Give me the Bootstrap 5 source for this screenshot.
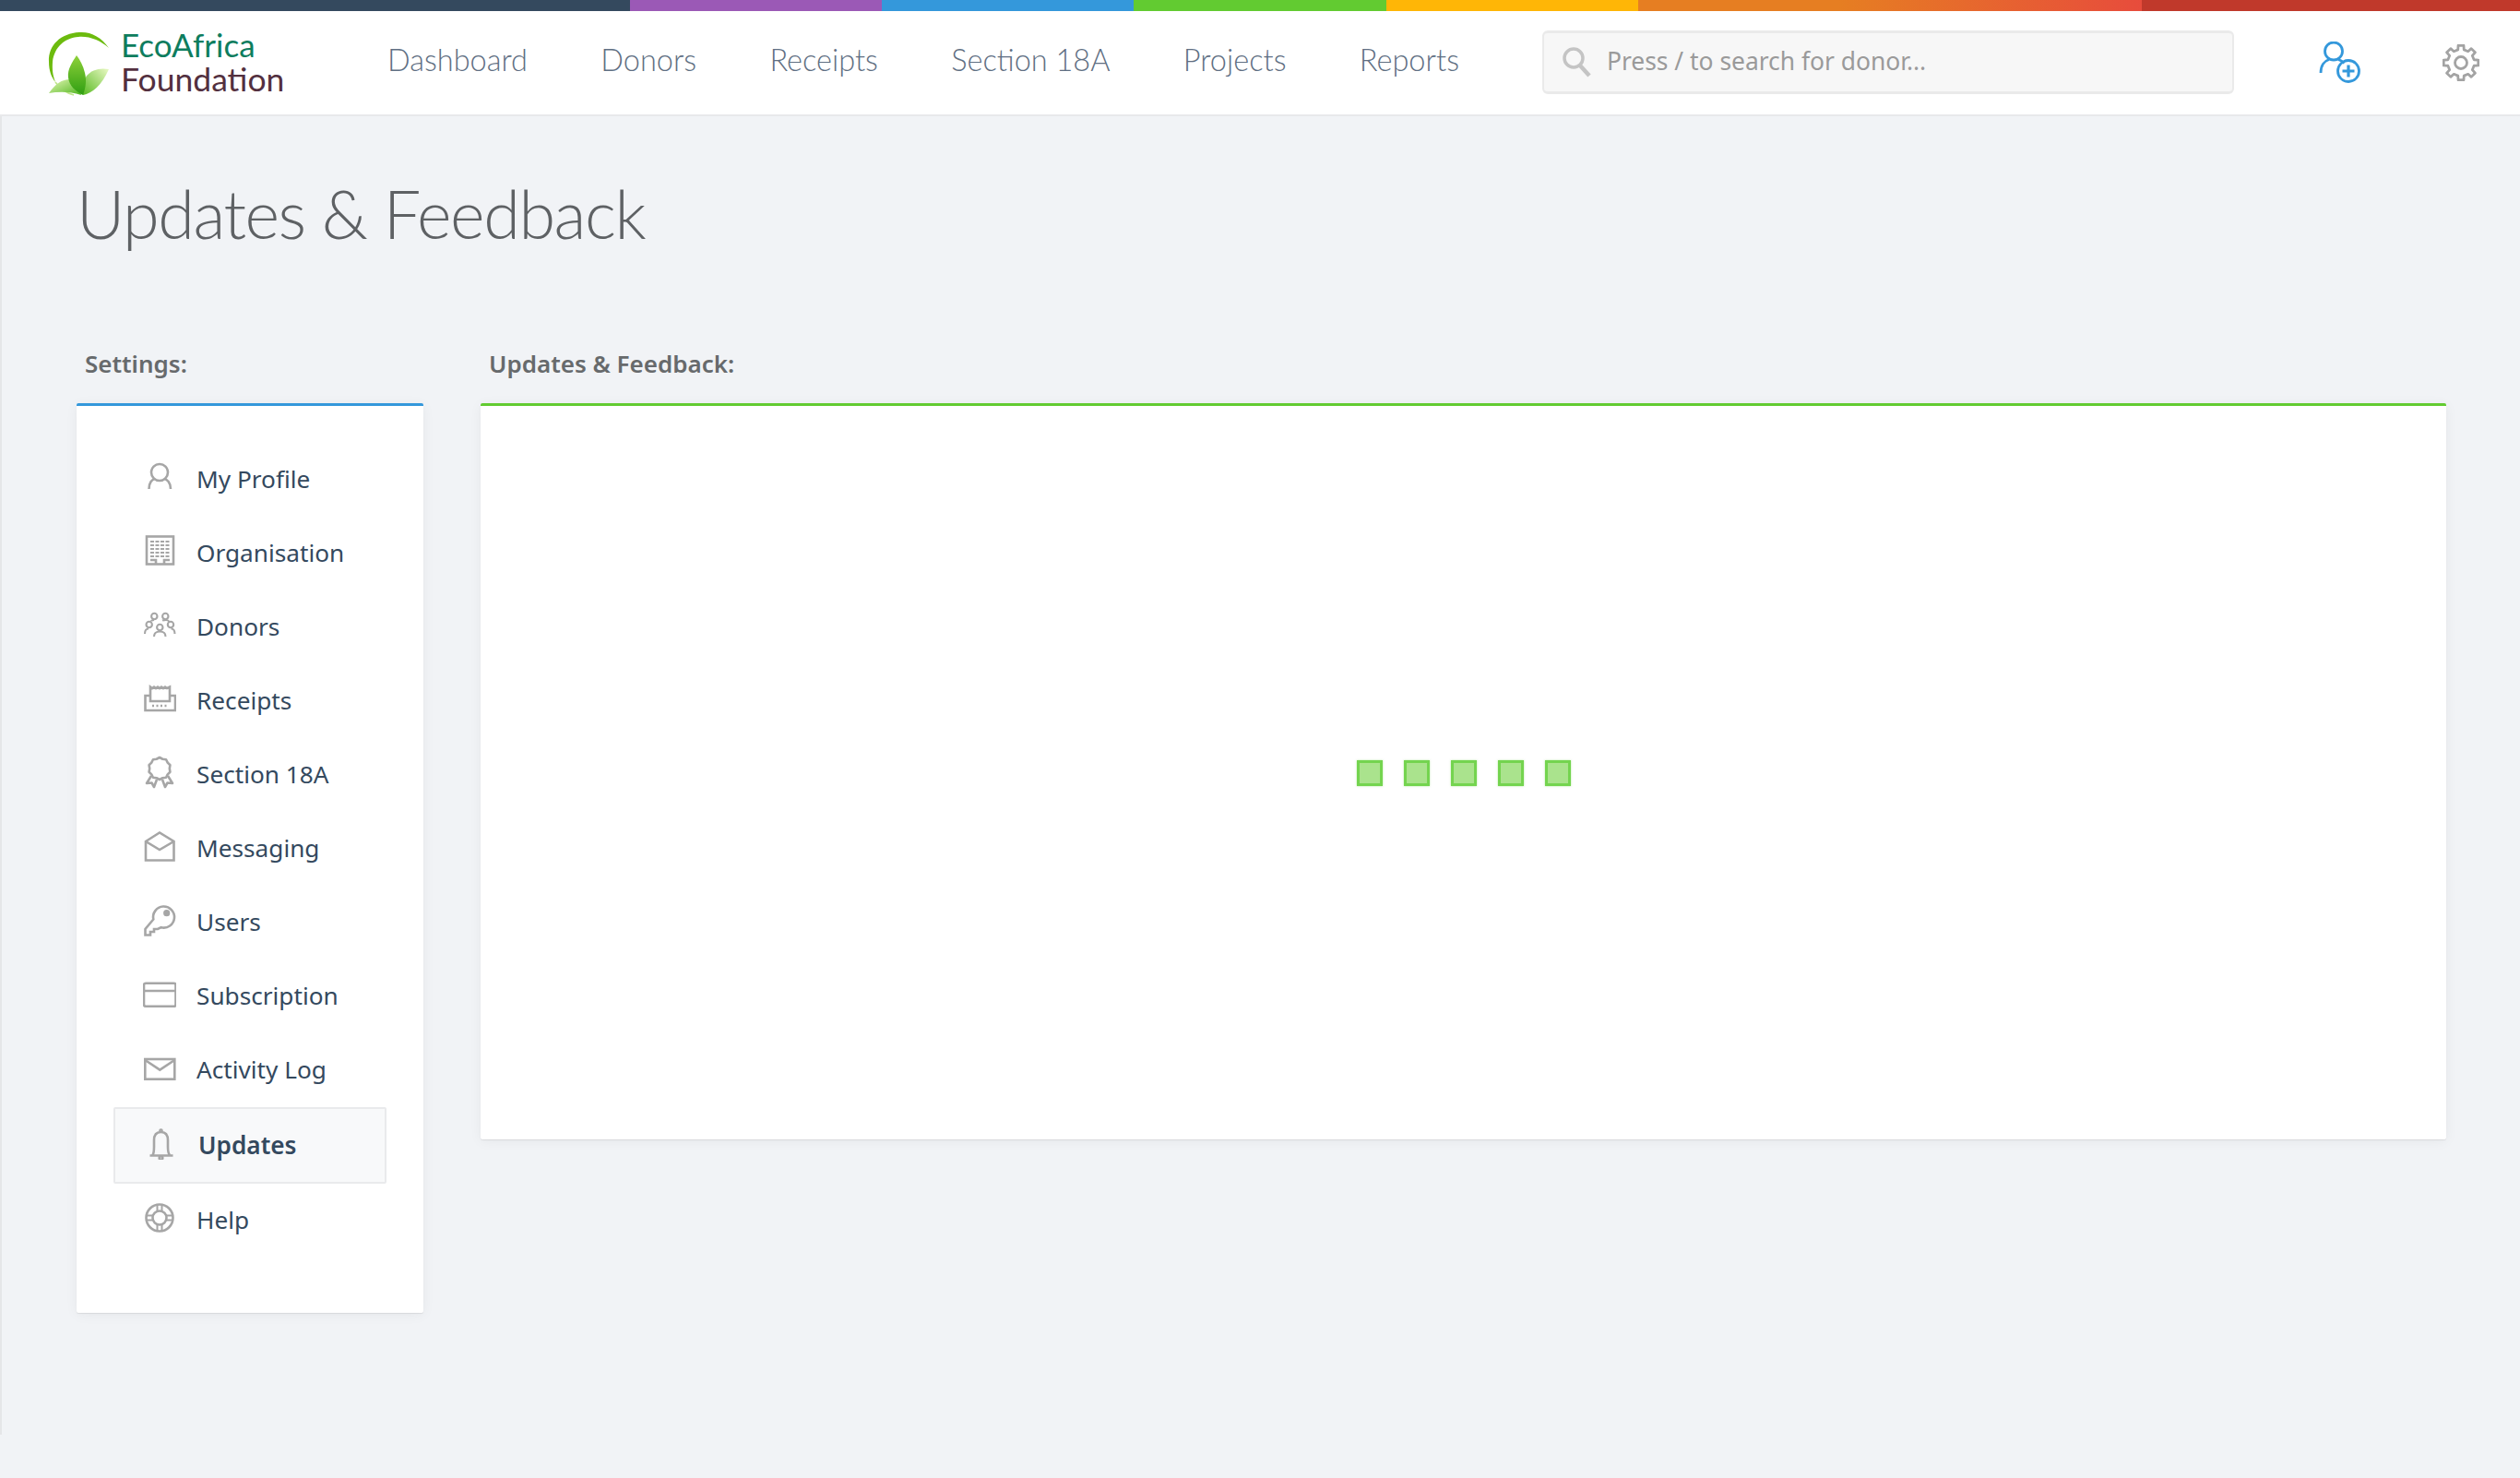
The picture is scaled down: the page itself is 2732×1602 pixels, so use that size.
<!DOCTYPE html>
<html lang="en"><head><meta charset="utf-8"><title>Updates &amp; Feedback</title>
<link href="https://cdn.jsdelivr.net/npm/bootstrap@5.3.0/dist/css/bootstrap.min.css" rel="stylesheet">
<style>
html,body{background:#f1f3f6;font-family:"Noto Sans","Open Sans",sans-serif;}
.stripe{height:12px}
.stripe>div:nth-child(1){width:25%;background:#34495e}
.stripe>div:nth-child(2){width:10%;background:#9b59b6}
.stripe>div:nth-child(3){width:10%;background:#3498db}
.stripe>div:nth-child(4){width:10%;background:#62cb31}
.stripe>div:nth-child(5){width:10%;background:#ffb606}
.stripe>div:nth-child(6){width:20%;background:linear-gradient(90deg,#e67e22 40%,#e74c3c)}
.stripe>div:nth-child(7){width:15%;background:#c0392b}
.topnav{height:114px;background:#fff;border-bottom:2px solid #e8e9eb;padding:0 44px 0 50px}
.brandlink{width:330px}
.brandlogo{width:72px;height:76px;margin-top:2px}
.brandtext{margin-left:9px;font-family:Lato,sans-serif;line-height:1;margin-top:-2px}
.brandtext .b1{display:block;color:#0e7d5e;font-size:35px;line-height:38px}
.brandtext .b2{display:block;color:#53303f;font-size:35.5px;line-height:38px}
.mainlinks{width:1242px;padding:0 40px;margin-top:-6px}
.mainlinks a{font-family:Lato,sans-serif;font-weight:300;color:#5f6f83;font-size:32.5px;text-decoration:none;line-height:40px}
.searchbox{width:750px;height:69px;background:#f7f7f7;border:2px solid #eaeaea;border-top-width:3px;border-bottom-width:3px;border-radius:6px;margin-left:50px;padding-left:18px;margin-top:-2px}
.searchbox input{border:0;background:transparent;outline:0;font-size:26.4px;color:#666;margin-left:16px;width:660px;padding:0;font-family:"Noto Sans",sans-serif}
.searchbox input::placeholder{color:#9a9a9a;opacity:1}
.topicons{margin-left:auto;gap:88px}
.pagewrap{border-left:2px solid #e5e6e8;padding:0 80px 132px 81px}
.pagetitle{font-family:Lato,sans-serif;font-weight:300;color:#5e6164;font-size:72px;letter-spacing:-1.45px;line-height:88px;margin:0;padding-top:61px;height:258px}
.panelhead{font-size:26px;font-weight:600;color:#676a6c;padding-left:9px;height:21px;line-height:21px;margin-bottom:0}
.leftcol{width:376px}
.rightcol{margin-left:62px}
.settingscard{background:#fff;border-top:3px solid #3498db;margin-top:32px;border-radius:2px;box-shadow:0 2px 14px rgba(0,0,0,.05),0 1px 1px rgba(0,0,0,.08);height:986px;padding:40px 40px 0}
.contentcard{background:#fff;border-top:3px solid #62cb31;margin-top:32px;border-radius:2px;box-shadow:0 2px 14px rgba(0,0,0,.05),0 1px 1px rgba(0,0,0,.08);height:798px}
.menurow{height:80px;display:flex;align-items:center;color:#34495e;font-size:26.2px;text-decoration:none;padding-left:32px}
.menurow svg{width:36px;height:36px;margin-right:22px;margin-top:-6px;flex:none;fill:none;stroke:#a6a6a6;stroke-width:2.6}
.menurow.current{font-weight:600;background:#f8f9fa;border:2px solid #e9eaec;border-radius:2px;height:83px;padding-left:32px;margin:0}
.loadsq{width:28px;height:28px;background:#aae38d;border:3px solid #74d44f;box-shadow:0 0 2px rgba(108,208,68,.5)}
.loaders{gap:23px}
</style></head><body>
<div class="stripe d-flex"><div></div><div></div><div></div><div></div><div></div><div></div><div></div></div>
<nav class="topnav d-flex align-items-center">
  <a href="#" class="brandlink d-flex align-items-center text-decoration-none flex-shrink-0">
    <svg class="brandlogo" viewBox="50 28 72 76">
      <defs>
        <linearGradient id="lg1" x1="0" y1="0" x2="0" y2="1"><stop offset="0" stop-color="#8fd13a"/><stop offset="1" stop-color="#2f9e12"/></linearGradient>
        <linearGradient id="lg2" x1="0" y1="0" x2="1" y2="1"><stop offset="0" stop-color="#e4f7b5"/><stop offset="1" stop-color="#4fb51e"/></linearGradient>
        <linearGradient id="lg3" x1="1" y1="0" x2="0" y2="1"><stop offset="0" stop-color="#eaf9c4"/><stop offset="1" stop-color="#58ba22"/></linearGradient>
      </defs>
      <path fill="#6cbb0e" d="M118 49C110 37 98 31 86 32 66 33 52 46 53 64 53 74 56 81 60 86 57 78 56.500 72 57 64 59 48 70 38 85 37 97 36 109 41 118 49Z"/>
      <path fill="none" stroke="#bfe58a" stroke-width="1.500" d="M60 86C65 93 72 98 80 100"/>
      <path fill="url(#lg3)" d="M118 72C108 70 99 73 94 79 90 85 90 93 90 100 100 98 110 90 118 72Z"/>
      <path fill="url(#lg2)" d="M53 98C60 88 67 83 76 83 82 85 86 92 88 100 76 96 64 96 53 98Z"/>
      <path fill="url(#lg1)" d="M83 57C78 65 73 72 74 81 75 90 82 96 90 100 93 92 94 84 92 76 90 68 87 62 83 57Z"/>
    </svg>
    <span class="brandtext"><span class="b1">EcoAfrica</span><span class="b2">Foundation</span></span>
  </a>
  <div class="mainlinks d-flex justify-content-between flex-shrink-0">
    <a href="#">Dashboard</a><a href="#">Donors</a><a href="#">Receipts</a><a href="#">Section 18A</a><a href="#">Projects</a><a href="#">Reports</a>
  </div>
  <div class="searchbox d-flex align-items-center flex-shrink-0">
    <svg width="34" height="34" viewBox="0 0 34 34" fill="none" stroke="#c4c4c4" stroke-width="3.500"><circle cx="14" cy="13" r="10"/><path d="M21 21l10 11" stroke-width="4.500"/></svg>
    <input type="text" placeholder="Press / to search for donor...">
  </div>
  <div class="topicons d-flex align-items-center">
    <svg width="46" height="46" viewBox="0 0 46 46" fill="none" stroke="#3498db" stroke-width="2.800"><circle cx="16" cy="10.500" r="9.500"/><path d="M2 34C2 26 6 21 11 19.500M21 19.500C24 20.500 26 22 27.500 23.500"/><circle cx="32" cy="32" r="11.500"/><path stroke-width="3.200" d="M32 25.500v13M25.500 32h13"/></svg>
    <svg width="40" height="40" viewBox="0 0 40 40" fill="none" stroke="#a3a3a3" stroke-width="2.800" stroke-linejoin="round"><path d="M34.130 16.740L38.770 17.030 38.770 22.970 34.130 23.260 32.300 27.690 35.370 31.170 31.170 35.370 27.690 32.300 23.260 34.130 22.970 38.770 17.030 38.770 16.740 34.130 12.310 32.300 8.830 35.370 4.630 31.170 7.700 27.690 5.870 23.260 1.230 22.970 1.230 17.030 5.870 16.740 7.700 12.310 4.630 8.830 8.830 4.630 12.310 7.700 16.740 5.870 17.030 1.230 22.970 1.230 23.260 5.870 27.690 7.700 31.170 4.630 35.370 8.830 32.300 12.310Z"/><circle cx="20" cy="20" r="6.500"/></svg>
  </div>
</nav>
<main class="pagewrap">
  <h1 class="pagetitle">Updates &amp; Feedback</h1>
  <div class="d-flex">
    <div class="leftcol flex-shrink-0">
      <div class="panelhead">Settings:</div>
      <div class="settingscard">
        <a class="menurow" href="#"><svg viewBox="0 0 36 36"><circle cx="18" cy="13" r="9"/><path d="M6.500 31C6.500 24 10 20.500 13 20M23 20C26 20.500 30 24 30 31"/></svg>My Profile</a>
        <a class="menurow" href="#"><svg viewBox="0 0 36 36"><rect x="4" y="2.500" width="29" height="30"/><path stroke-width="2" stroke-dasharray="4 1.500" d="M8 8H29M8 12H29M8 16H29M8 20H29M8 24H29"/><path d="M8 28H14V32M23 32V28H29"/></svg>Organisation</a>
        <a class="menurow" href="#"><svg viewBox="0 0 36 36"><g stroke-width="2.100"><circle cx="12.300" cy="9" r="3.200"/><circle cx="24.300" cy="9" r="3.200"/><circle cx="6.700" cy="18" r="3.200"/><circle cx="30" cy="18" r="3.200"/><circle cx="18.300" cy="21" r="3.200"/><path d="M2 28C2 24 3.500 22.500 6 22.500M34.500 28C34.500 24 33 22.500 30.500 22.500M12 31C12 27 14 25.500 18.300 25.500 22.500 25.500 24.500 27 24.500 31M9 14.500C9 13.500 10 13 12 13M21 13.500C22 13 24 13 25 13 27 13 28 14 28.500 15"/></g></svg>Donors</a>
        <a class="menurow" href="#"><svg viewBox="0 0 36 36"><path d="M8 15H2.500V31H35V15H29M8 21V5.500L10 7 12 5.500 14 7 16 5.500 18 7 20 5.500 22 7 24 5.500 26 7 29 5.500V21H8Z"/><path stroke-dasharray="2 2.500" d="M10 26H27"/></svg>Receipts</a>
        <a class="menurow" href="#"><svg viewBox="0 0 36 36" stroke-linejoin="round"><path d="M18 2L21.340 3.730 25.050 4.290 26.740 7.650 29.410 10.290 28.800 14 29.410 17.710 26.740 20.350 25.050 23.710 21.340 24.270 18 26 14.660 24.270 10.950 23.710 9.260 20.350 6.590 17.710 7.200 14 6.590 10.290 9.260 7.650 10.950 4.290 14.660 3.730Z"/><path d="M9 22L4 30 9.500 29.500 12 34 15 26M27 22L32 30 26.500 29.500 24 34 21 26"/></svg>Section 18A</a>
        <a class="menurow" href="#"><svg viewBox="0 0 36 36"><path d="M3 13L18 3.500 33.500 13V33.500H3ZM3 13L18 22 33.500 13"/></svg>Messaging</a>
        <a class="menurow" href="#"><svg viewBox="0 0 36 36"><path d="M19.700 26.200A11.500 11.500 0 1 0 11.300 17.500L2.500 28V34.500H8V31H12V28H16Z"/><circle cx="25.700" cy="10.700" r="2.300" fill="#a6a6a6"/></svg>Users</a>
        <a class="menurow" href="#"><svg viewBox="0 0 36 36"><rect x="1" y="6.700" width="34.500" height="25" rx="2"/><path d="M1 15H35.500"/></svg>Subscription</a>
        <a class="menurow" href="#"><svg viewBox="0 0 36 36"><rect x="2.300" y="9" width="32" height="21.700"/><path d="M2.300 10L18.300 20.700 34.300 10"/></svg>Activity Log</a>
        <a class="menurow current" href="#"><svg viewBox="0 0 36 36"><path d="M5.500 31.500H30.500M8.500 31C10 29 10 26 10 22V15C10 9 13 6 17.500 6 22 6 25 9 25 15V22C25 26 25 29 27 31"/><circle cx="17.500" cy="34" r="1.800"/><circle cx="17.500" cy="4.500" r="1"/></svg>Updates</a>
        <a class="menurow" href="#"><svg viewBox="0 0 36 36"><circle cx="18" cy="18" r="14.500"/><circle cx="18" cy="18" r="7.500"/><path stroke-width="2" d="M15.500 4V10.500M20.500 4V10.500M15.500 25.500V32M20.500 25.500V32M4 15.500H10.500M4 20.500H10.500M25.500 15.500H32M25.500 20.500H32"/></svg>Help</a>
      </div>
    </div>
    <div class="rightcol flex-grow-1">
      <div class="panelhead">Updates &amp; Feedback:</div>
      <div class="contentcard d-flex justify-content-center align-items-center">
        <div class="loaders d-flex">
          <div class="loadsq"></div><div class="loadsq"></div><div class="loadsq"></div><div class="loadsq"></div><div class="loadsq"></div>
        </div>
      </div>
    </div>
  </div>
</main>
<script src="https://cdn.jsdelivr.net/npm/bootstrap@5.3.0/dist/js/bootstrap.bundle.min.js"></script>
</body></html>
